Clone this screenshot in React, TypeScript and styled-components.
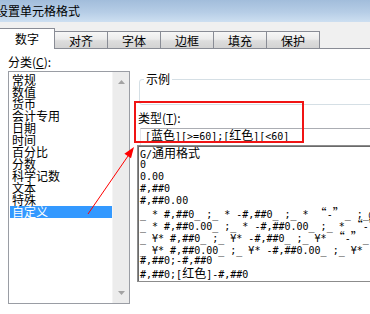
import React from "react";
import styled, { createGlobalStyle } from "styled-components";

const GlobalStyle = createGlobalStyle`
  html, body {
    margin: 0;
    padding: 0;
    background: #ffffff;
    overflow: hidden;
  }
  body {
    font-family: "Noto Sans CJK SC", "DejaVu Sans", sans-serif;
    color: #000;
  }
`;

const tabs = ["数字", "对齐", "字体", "边框", "填充", "保护"];

const categories = [
  "常规", "数值", "货币", "会计专用", "日期", "时间",
  "百分比", "分数", "科学记数", "文本", "特殊", "自定义",
];

const formats = [
  "G/通用格式",
  "0",
  "0.00",
  "#,##0",
  "#,##0.00",
  "_ * #,##0_ ;_ * -#,##0_ ;_ * “-”_ ;_@_ ",
  "_ * #,##0.00_ ;_ * -#,##0.00_ ;_ * “-”??_ ;_@_ ",
  "_ ¥* #,##0_ ;_ ¥* -#,##0_ ;_ ¥* “-”_ ;_@_ ",
  "_ ¥* #,##0.00_ ;_ ¥* -#,##0.00_ ;_ ¥* “-”??_ ;_@_ ",
  "#,##0;-#,##0",
  "#,##0;[红色]-#,##0",
];

// wide (CJK / curly quote) runs get the 12px face, the rest stays half width
const mixed = (text: string) =>
  text.split(/([\u4e00-\u9fff“”]+)/).filter(Boolean).map((part, i) =>
    /[\u4e00-\u9fff“”]/.test(part) ? <Han key={i}>{part}</Han> : <span key={i}>{part}</span>
  );

const App = () => {
  return (
    <Viewport>
      <GlobalStyle />
      <Dialog>
        <TitleBar>设置单元格格式</TitleBar>

        <TabStrip>
          {tabs.map((t, i) => (
            <Tab key={t} $active={i === 0}>{t}</Tab>
          ))}
        </TabStrip>

        <Panel>
          <LeftCol>
            <FieldLabel>分类(<u>C</u>):</FieldLabel>
            <ListBox>
              <Items>
                {categories.map((c, i) => (
                  <Item key={c} $selected={i === categories.length - 1}>{c}</Item>
                ))}
              </Items>
              <ScrollBar>
                <ScrollButton>
                  <svg width="7" height="4" viewBox="0 0 7 4"><path d="M0 4 L3.5 0 L7 4 Z" fill="#a3a3a3" /></svg>
                </ScrollButton>
                <ScrollButton>
                  <svg width="7" height="4" viewBox="0 0 7 4"><path d="M0 0 L7 0 L3.5 4 Z" fill="#a3a3a3" /></svg>
                </ScrollButton>
              </ScrollBar>
            </ListBox>
          </LeftCol>

          <RightCol>
            <GroupBox>
              <Legend>示例</Legend>
            </GroupBox>
            <TypeLabel>类型(<u>T</u>):</TypeLabel>
            <TypeInput>{mixed("[蓝色][>=60];[红色][<60]")}</TypeInput>
            <FormatList>
              {formats.map((f) => (
                <FormatRow key={f}>{mixed(f)}</FormatRow>
              ))}
            </FormatList>
          </RightCol>
        </Panel>

        <Highlight />
        <Arrow width="370" height="314" viewBox="0 0 370 314">
          <line x1="88" y1="214" x2="128" y2="156" stroke="#ff0000" strokeWidth="1" />
          <polygon points="134,147 131,158.3 124.4,153.7" fill="#ff0000" />
        </Arrow>
      </Dialog>
    </Viewport>
  );
};

/* CSS */
const Viewport = styled.div`
  width: 370px;
  height: 314px;
  overflow: hidden;
`;

const Dialog = styled.div`
  position: relative;
  width: 430px;
  height: 314px;
  background: #ffffff;
`;

const TitleBar = styled.div`
  height: 22px;
  line-height: 22px;
  font-size: 12px;
  text-indent: -4px;
  white-space: nowrap;
  background: linear-gradient(to bottom, #a2bddb 0%, #b6cde6 55%, #cddff1 100%);
`;

const TabStrip = styled.div`
  display: flex;
  align-items: flex-end;
  height: 26px;
  background: #f0f0f0;
  border-bottom: 1px solid #898c95;
`;

const Tab = styled.div<{ $active?: boolean }>`
  display: flex;
  align-items: center;
  justify-content: center;
  box-sizing: border-box;
  font-size: 12px;
  line-height: 12px;
  border: 1px solid #898c95;
  border-bottom: none;
  margin-left: -1px;
  width: ${(p) => (p.$active ? "56px" : "54px")};
  height: ${(p) => (p.$active ? "21px" : "17px")};
  margin-bottom: ${(p) => (p.$active ? "-1px" : "0")};
  padding-top: ${(p) => (p.$active ? "0" : "1px")};
  position: relative;
  z-index: ${(p) => (p.$active ? 2 : 1)};
  background: ${(p) =>
    p.$active
      ? "#ffffff"
      : "linear-gradient(to bottom, #f7f7f7 0%, #ebebeb 45%, #dddddd 55%, #d3d3d3 100%)"};
`;

const Panel = styled.div`
  display: grid;
  grid-template-columns: 122px 1fr;
  column-gap: 8px;
  padding-left: 8px;
`;

const LeftCol = styled.div`
  display: flex;
  flex-direction: column;
`;

const FieldLabel = styled.div`
  font-size: 12px;
  line-height: 14px;
  margin-top: 6px;
  margin-bottom: 2px;
  white-space: nowrap;
`;

const ListBox = styled.div`
  display: grid;
  grid-template-columns: 1fr 17px;
  height: 233px;
  box-sizing: border-box;
  border: 1px solid #9a9da4;
`;

const Items = styled.div`
  padding: 2px 0 0 1px;
`;

const Item = styled.div<{ $selected?: boolean }>`
  height: 12px;
  line-height: 12px;
  font-size: 12px;
  padding-left: 2px;
  white-space: nowrap;
  background: ${(p) => (p.$selected ? "#3399ff" : "transparent")};
  color: ${(p) => (p.$selected ? "#ffffff" : "#000000")};
`;

const ScrollBar = styled.div`
  display: flex;
  flex-direction: column;
  justify-content: space-between;
  background: #ececec;
  border-left: 1px solid #f4f4f4;
`;

const ScrollButton = styled.div`
  height: 20px;
  display: flex;
  align-items: center;
  justify-content: center;
`;

const RightCol = styled.div`
  display: flex;
  flex-direction: column;
`;

const GroupBox = styled.fieldset`
  margin: 24px 0 0 1px;
  padding: 0 0 19px 4px;
  min-width: 0;
  border: 1px solid #d5dfe5;
  border-radius: 3px;
`;

const Legend = styled.legend`
  font-size: 12px;
  line-height: 12px;
  padding: 0 2px;
`;

const TypeLabel = styled.div`
  font-size: 12px;
  line-height: 14px;
  margin-top: 6px;
  white-space: nowrap;
`;

const TypeInput = styled.div`
  margin: 3px 0 0 2px;
  height: 16px;
  line-height: 16px;
  padding-left: 4px;
  border: 1px solid #e2e3ea;
  border-top-color: #abadb3;
  border-bottom: none;
  font-family: "DejaVu Sans Mono", "Noto Sans CJK SC", monospace;
  font-size: 10px;
  white-space: nowrap;
`;

const FormatList = styled.div`
  margin-left: -1px;
  height: 137px;
  box-sizing: border-box;
  padding: 1px 0 0 2px;
  border: 1px solid #8c8c8c;
  box-shadow: inset 1px 1px 0 #6a6a6a;
  overflow: hidden;
`;

const FormatRow = styled.div`
  height: 12px;
  line-height: 12px;
  font-family: "DejaVu Sans Mono", "Noto Sans CJK SC", monospace;
  font-size: 10px;
  white-space: pre;
`;

const Han = styled.span`
  font-family: "Noto Sans CJK SC", sans-serif;
  font-size: 12px;
  line-height: 12px;
`;

const Highlight = styled.div`
  position: absolute;
  left: 134px;
  top: 101px;
  width: 170px;
  height: 42px;
  box-sizing: border-box;
  border: 2px solid #f01414;
  pointer-events: none;
`;

const Arrow = styled.svg`
  position: absolute;
  left: 0;
  top: 0;
  pointer-events: none;
`;

export default App;
